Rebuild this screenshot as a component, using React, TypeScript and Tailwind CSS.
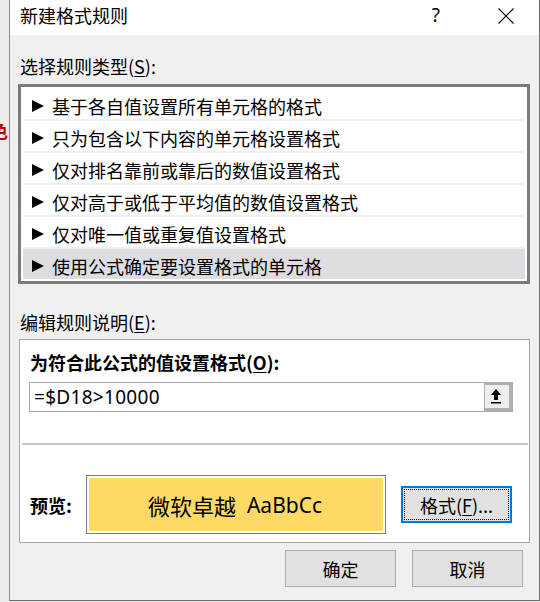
import React from "react";

const CJK = { fontFamily: '"Noto Sans CJK SC", "Noto Sans", sans-serif' };
const LAT = { fontFamily: '"Noto Sans", "Noto Sans CJK SC", sans-serif' };

const rules = [
  "基于各自值设置所有单元格的格式",
  "只为包含以下内容的单元格设置格式",
  "仅对排名靠前或靠后的数值设置格式",
  "仅对高于或低于平均值的数值设置格式",
  "仅对唯一值或重复值设置格式",
  "使用公式确定要设置格式的单元格",
];

function Tri() {
  return (
    <svg width="12" height="12" viewBox="0 0 12 12" className="shrink-0">
      <polygon points="0,0 12,6 0,12" fill="#000" />
    </svg>
  );
}

export default function App() {
  return (
    <div className="w-[540px] h-[602px] flex bg-[#ebebeb] text-black" style={CJK}>
      <div className="w-[9px] h-full overflow-hidden pt-[120px]">
        <div className="-ml-[10px] text-[18px] leading-[20px] font-bold text-[#c00000]">色</div>
      </div>
      <div className="w-[531px] h-[601px] flex flex-col border-l border-r border-b border-l-[#8c8c8c] border-r-[#707070] border-b-[#6a6a6a]">
        {/* Title bar */}
        <div className="h-[35px] bg-white flex items-center shrink-0 pb-[5px]">
          <div className="ml-[10px] text-[18px] leading-[24px]">新建格式规则</div>
          <div className="ml-auto text-[19px] leading-[24px] mr-[58px]" style={LAT}>?</div>
          <svg width="16" height="16" viewBox="0 0 16 16" className="mr-[25px] mt-[2px]">
            <path d="M0.5 0.5 L15.5 15.5 M15.5 0.5 L0.5 15.5" stroke="#000" strokeWidth="1.1" />
          </svg>
        </div>
        {/* Body */}
        <div className="flex-1 bg-[#f0f0f0] flex flex-col pt-[19px]">
          <div className="ml-[10px] text-[18px] leading-[24px]">
            选择规则类型(<span className="underline underline-offset-2">S</span>):
          </div>
          <div className="ml-[8px] mt-[6px] w-[512px] h-[200px] border-[3px] border-[#7a7a7a] bg-white p-[2px] flex flex-col gap-[2px]">
            {rules.map((r, i) => (
              <div
                key={i}
                className={
                  "h-[30px] flex items-center pl-[9px] pt-[4px] gap-[8px] shrink-0 " +
                  (i === 5 ? "bg-[#dcdce1]" : "bg-white")
                }
                style={{ boxShadow: i < 5 ? "0 2px 0 #f0f0f0" : undefined }}
              >
                <Tri />
                <span className="text-[18px] leading-[24px]">{r}</span>
              </div>
            ))}
          </div>
          <div className="ml-[10px] mt-[26px] text-[18px] leading-[24px]">
            编辑规则说明(<span className="underline underline-offset-2">E</span>):
          </div>
          <div className="ml-[9px] mt-[5px] w-[511px] h-[204px] border border-[#a5a5a5] bg-white flex flex-col pt-[10px]">
            <div className="ml-[10px] text-[18px] leading-[24px] font-bold">
              为符合此公式的值设置格式(<span className="underline underline-offset-2">O</span>):
            </div>
            <div className="ml-[9px] mt-[8px] w-[484px] h-[30px] border border-[#a9a9a9] flex">
              <div className="flex-1 flex items-center pl-[4px] text-[19px] leading-[24px] tracking-[0.3px]" style={LAT}>
                =$D18&gt;10000
              </div>
              <div className="w-[28px] h-full border-t-2 border-l border-r-[3px] border-b-[3px] border-[#b0b0b0] bg-[#efefef] flex items-center justify-center pr-[2px]">
                <svg width="10" height="15" viewBox="0 0 10 15">
                  <polygon points="5,0 10,6 7,6 7,11 3,11 3,6 0,6" fill="#000" />
                  <rect x="0" y="13" width="10" height="1.5" fill="#000" />
                </svg>
              </div>
            </div>
            <div className="ml-[2px] mr-[1px] mt-[31px] h-[2px] bg-[#c4c4c4]" />
            <div className="mt-[30px] h-[59px] flex items-center">
              <div className="ml-[10px] w-[56px] text-[18px] leading-[24px] font-bold">预览:</div>
              <div className="w-[300px] h-[59px] border border-[#7a7a7a] p-[2px]">
                <div className="w-full h-full bg-[#ffd966] flex items-center justify-center pr-[2px]">
                  <span className="text-[22px] leading-[28px]">微软卓越</span>
                  <span className="ml-[11px] text-[21px] leading-[28px]" style={LAT}>AaBbCc</span>
                </div>
              </div>
              <div className="ml-[15px] w-[111px] h-[37px] border-2 border-[#0078d7] bg-[#e1e1e1] p-[1px]">
                <div className="w-full h-full border border-dotted border-black flex items-center justify-center text-[18px] leading-[24px]">
                  格式(<span className="underline underline-offset-2">F</span>)...
                </div>
              </div>
            </div>
          </div>
          <div className="mt-[7px] flex justify-end gap-[16px] pr-[16px]">
            <div className="w-[111px] h-[37px] border border-[#adadad] bg-[#e1e1e1] flex items-center justify-center text-[18px] leading-[24px]">
              确定
            </div>
            <div className="w-[111px] h-[37px] border border-[#adadad] bg-[#e1e1e1] flex items-center justify-center text-[18px] leading-[24px]">
              取消
            </div>
          </div>
        </div>
      </div>
    </div>
  );
}
